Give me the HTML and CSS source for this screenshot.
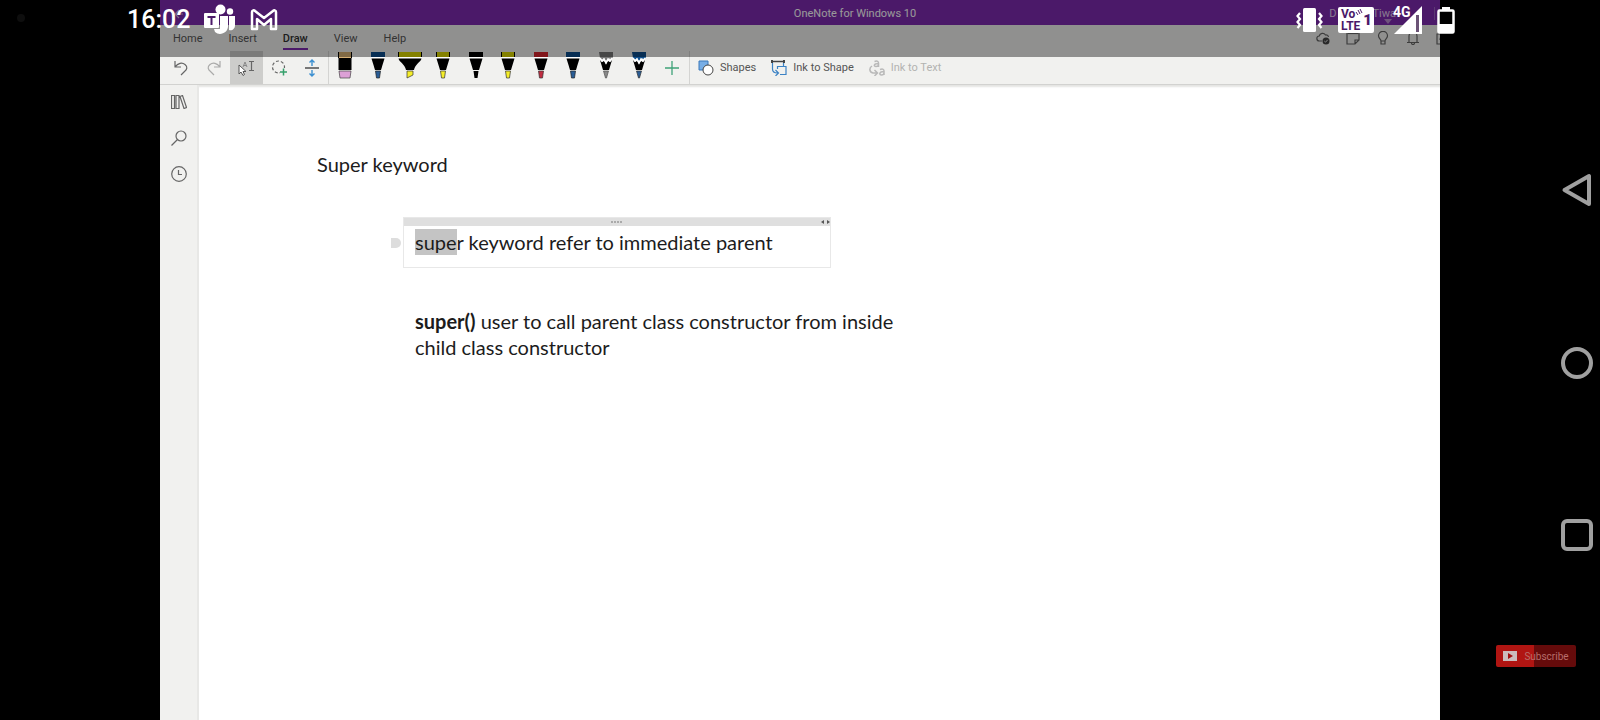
FILE: index.html
```html
<!DOCTYPE html>
<html lang="en">
<head>
<meta charset="utf-8">
<title>OneNote for Windows 10</title>
<link rel="stylesheet" href="styles.css">
</head>
<body>
<div class="screen">
  <div class="margin"><span class="camera"></span></div>

  <div class="app">
    <header class="titlebar">
      <button class="back" aria-label="Back"><svg width="10" height="10" viewBox="0 0 10 10"><path d="M9 5H1M5 1L1 5l4 4" class="line"/></svg></button>
      <h1 class="app-name">OneNote for Windows 10</h1>
      <div class="account"><span>D</span><span class="account-last">Tiwa</span><i class="bar"></i><svg class="caret" width="8" height="5" viewBox="0 0 8 5"><path d="M0 0h8L4 5z" fill="#b98ad0"/></svg></div>
    </header>

    <nav class="tabs">
      <a href="#home">Home</a>
      <a href="#insert">Insert</a>
      <a href="#draw" class="active">Draw</a>
      <a href="#view">View</a>
      <a href="#help">Help</a>
      <div class="tab-actions">
        <button aria-label="Sync status"><svg width="14" height="14" viewBox="0 0 14 14"><path d="M6 10H3.500a2.500 2.500 0 0 1-.3-5A3.500 3.500 0 0 1 9.500 4a2.500 2.500 0 0 1 3 2" class="line"/><circle cx="10" cy="10" r="3.500" fill="#444"/><path d="M8.300 10l1.200 1.200 2.200-2.400" stroke="#ddd" fill="none"/></svg></button>
        <button aria-label="Feed"><svg width="14" height="14" viewBox="0 0 14 14"><path d="M1 2h12v7l-4 4H1zM13 9H9v4" class="line"/><path d="M2 2.500h10" class="line"/></svg></button>
        <button aria-label="Tell me"><svg width="14" height="14" viewBox="0 0 14 14"><path d="M5 10c0-2-2.500-2.500-2.500-5.200a4.500 4.500 0 0 1 9 0C11.500 7.500 9 8 9 10zM5 10v3h4v-3" class="line"/></svg></button>
        <button aria-label="Notifications"><svg width="14" height="14" viewBox="0 0 14 14"><path d="M3 11V5a4 4 0 0 1 8 0v6M1 11.500h12M5.500 12a1.500 1.500 0 0 0 3 0" class="line"/></svg></button>
        <button aria-label="Share"><svg width="14" height="14" viewBox="0 0 14 14"><path d="M5 3H1v10h10V9M4 9c0-3 2-5 7-5" class="line"/></svg></button>
      </div>
    </nav>

    <div class="toolbar">
      <div class="tools">
        <button aria-label="Undo"><svg width="16" height="16" viewBox="0 0 16 16"><path d="M2 1v6h6M2 7c3-4 7-5 10-2.500s2 5-.5 7L8 15" class="line"/></svg></button>
        <button aria-label="Redo" class="dim"><svg width="16" height="16" viewBox="0 0 16 16"><path d="M14 1v6H8M14 7C11 3 7 2 4 4.500s-2 5 .5 7L8 15" class="line"/></svg></button>
        <button aria-label="Select objects or type text" class="pressed"><svg width="18" height="16" viewBox="0 0 18 16"><path d="M2 5v9l2-2 2 3.500 1.500-1L6 11.500h3z" fill="#fff" stroke="#555"/><path d="M6 7l2-5 2 5M7 5.500h2" fill="none" stroke="#888"/><path d="M12 1.500h5M14.500 1.500v9M12 10.500h5" class="line"/></svg></button>
        <button aria-label="Lasso select"><svg width="17" height="16" viewBox="0 0 17 16"><circle cx="7.500" cy="7" r="6" class="line" stroke-dasharray="3 2"/><rect x="9" y="8" width="8" height="8" fill="#f1f1ef"/><path d="M12.500 8.500v7M9 12h7" stroke="#35a06b" fill="none" stroke-width="1.500"/></svg></button>
        <button aria-label="Insert space"><svg width="16" height="18" viewBox="0 0 16 18"><path d="M1 9h14" stroke="#777" stroke-width="2"/><path d="M8 7V1M5.500 3.500L8 1l2.500 2.500M8 11v6M5.500 14.500L8 17l2.500-2.500" fill="none" stroke="#3b8fd0" stroke-width="1.400"/></svg></button>
      </div>
      <div class="pens">
        <button aria-label="Eraser"><svg width="14" height="27" viewBox="0 0 14 27"><path d="M1 0h12v6H1z" fill="#d8b176"/><path d="M0 0h1v6H0zM13 0h1v6h-1zM.5 6h13v12H.5z"/><path d="M1 19h12l-1 7H2z" fill="#dca0d6" stroke="#444" stroke-width=".7"/></svg></button>
        <button aria-label="Pen, blue"><svg width="14" height="27" viewBox="0 0 14 27"><path d="M0 0h14v5H0z" fill="#0d4e8c"/><path d="M0 5h14v1.500H0z" fill="#fff"/><path d="M.5 6.500h13L10 18H4z"/><path d="M4.500 19h5L8.500 26h-3z" fill="#295d96" stroke="#222" stroke-width=".7"/></svg></button>
        <button aria-label="Highlighter, yellow"><svg width="24" height="27" viewBox="0 0 24 27"><path d="M0 0h24v5H0z" fill="#dcd800"/><path d="M0 5h24v1.500H0z" fill="#fff"/><path d="M0 0h1v5H0zM23 0h1v5h-1zM.5 6.500h23C23 10 17 12 16 18H8C7 12 1 10 .5 6.500z"/><path d="M9 19h6v4l-6 3z" fill="#f5ed28" stroke="#333" stroke-width=".7"/></svg></button>
        <button aria-label="Pen, yellow"><svg width="14" height="27" viewBox="0 0 14 27"><path d="M0 0h14v5H0z" fill="#dcd800"/><path d="M0 5h14v1.500H0z" fill="#fff"/><path d="M0 0h1v5H0zM13 0h1v5h-1zM.5 6.500h13L10 18H4z"/><path d="M4.500 19h5L8.500 26h-3z" fill="#f5ed28" stroke="#333" stroke-width=".7"/></svg></button>
        <button aria-label="Pen, black"><svg width="14" height="27" viewBox="0 0 14 27"><path d="M0 5h14v1.500H0z" fill="#fff"/><path d="M0 0h14v5H0zM.5 6.500h13L10 18H4zM4.500 19h5L8.500 26h-3z"/></svg></button>
        <button aria-label="Pen, yellow 2"><svg width="14" height="27" viewBox="0 0 14 27"><path d="M0 0h14v5H0z" fill="#dcd800"/><path d="M0 5h14v1.500H0z" fill="#fff"/><path d="M0 0h1v5H0zM13 0h1v5h-1zM.5 6.500h13L10 18H4z"/><path d="M4.500 19h5L8.500 26h-3z" fill="#f5ed28" stroke="#333" stroke-width=".7"/></svg></button>
        <button aria-label="Pen, red"><svg width="14" height="27" viewBox="0 0 14 27"><path d="M0 0h14v5H0z" fill="#d8262e"/><path d="M0 5h14v1.500H0z" fill="#fff"/><path d="M.5 6.500h13L10 18H4z"/><path d="M4.500 19h5L8.500 26h-3z" fill="#c02c40" stroke="#333" stroke-width=".7"/></svg></button>
        <button aria-label="Pen, blue 2"><svg width="14" height="27" viewBox="0 0 14 27"><path d="M0 0h14v5H0z" fill="#0d4e8c"/><path d="M0 5h14v1.500H0z" fill="#fff"/><path d="M.5 6.500h13L10 18H4z"/><path d="M4.500 19h5L8.500 26h-3z" fill="#295d96" stroke="#222" stroke-width=".7"/></svg></button>
        <button aria-label="Pencil, gray"><svg width="14" height="27" viewBox="0 0 14 27"><path d="M0 0h14v5l-2 3-2-2-2 2-1 1-2-3-2 2-2-2z" fill="#777"/><path d="M1 8l2 2 2-1 2 3 2-3 2 1 2-2-3 10H4z"/><path d="M1 6l2 3 2-2 2 4 2-4 2 2 2-3" fill="none" stroke="#fff" stroke-width="1.600"/><path d="M4.500 19h5L7.500 26h-1z" fill="#888" stroke="#555" stroke-width=".7"/></svg></button>
        <button aria-label="Pencil, blue"><svg width="14" height="27" viewBox="0 0 14 27"><path d="M0 0h14v5l-2 3-2-2-2 2-1 1-2-3-2 2-2-2z" fill="#0d4e8c"/><path d="M1 8l2 2 2-1 2 3 2-3 2 1 2-2-3 10H4z"/><path d="M1 6l2 3 2-2 2 4 2-4 2 2 2-3" fill="none" stroke="#fff" stroke-width="1.600"/><path d="M4.500 19h5L7.500 26h-1z" fill="#295d96" stroke="#333" stroke-width=".7"/></svg></button>
      </div>
      <button class="add" aria-label="Add pen"><svg width="14" height="14" viewBox="0 0 14 14"><path d="M7 0v14M0 7h14" stroke="#3fa378" stroke-width="1.300"/></svg></button>
      <div class="commands">
        <button><svg width="16" height="16" viewBox="0 0 16 16"><path d="M1 1h9v9H1z" fill="#78aee6" stroke="#3a78ba"/><circle cx="10" cy="10" r="5" fill="#fff" stroke="#444"/></svg>Shapes</button>
        <button><svg width="16" height="16" viewBox="0 0 16 16"><path d="M1 1.500h12" stroke="#444" stroke-width="1.500"/><path d="M1 0v3M13 0v3" stroke="#444" stroke-width="2"/><path d="M12.500 3v3M1.500 3v6c0 3 2 4 5 4M4.500 10l3 3-3 3M6.500 9V6.500h8.500v8H9" fill="none" stroke="#3b82c4" stroke-width="1.200"/></svg>Ink to Shape</button>
        <button disabled><svg width="16" height="16" viewBox="0 0 16 16"><path d="M5.500 1.500c3-1 4 0 4 1.500v4M9.500 3.500c-5 0-5 3-2.500 3 1.500 0 2.500-1 2.500-2M11 9.500c3-1 4 0 4 1.500v4M15 11.500c-5 0-5 3.500-2.500 3.500 1.500 0 2.500-1 2.500-2M3 6c-3 2-3 6 1 7h4M5.500 10l3 3-3 3" fill="none" stroke="#b9b9b9" stroke-width="1.500"/></svg>Ink to Text</button>
      </div>
    </div>

    <div class="workspace">
      <aside class="rail">
        <button aria-label="Show notebooks"><svg width="16" height="14" viewBox="0 0 16 14"><path d="M.5.500h3v13h-3zM5 .500h3v13H5zM9 1.500l2.500-1 4 12-2.500 1z" class="line"/></svg></button>
        <button aria-label="Search"><svg width="16" height="16" viewBox="0 0 16 16"><circle cx="10" cy="6" r="5" class="line"/><path d="M6.500 9.500l-6 6" class="line"/></svg></button>
        <button aria-label="Recent notes"><svg width="16" height="16" viewBox="0 0 16 16"><circle cx="8" cy="8" r="7.300" class="line"/><path d="M7.500 4v4.500H11" class="line"/></svg></button>
      </aside>
      <main class="page">
        <h2 class="page-title">Super keyword</h2>
        <section class="note">
          <span class="grip"></span>
          <div class="note-bar">
            <svg class="dots" width="12" height="2" viewBox="0 0 12 2"><path d="M0 1h2M3 1h2M6 1h2M9 1h2" stroke="#aaa" stroke-width="2"/></svg>
            <svg class="resize" width="9" height="4" viewBox="0 0 9 4"><path d="M3 0v4L0 2zM6 0v4l3-2z" fill="#555"/></svg>
          </div>
          <p><span class="selected">supe</span>r keyword refer to immediate parent</p>
        </section>
        <p class="free-text"><b>super()</b> user to call parent class constructor from inside child class constructor</p>
      </main>
    </div>
  </div>

  <div class="system-nav">
    <button aria-label="Back"><svg width="32" height="34" viewBox="0 0 32 34"><path d="M28 3v28L3.500 17z" fill="none" stroke="#a0a0a0" stroke-width="4" stroke-linejoin="round"/></svg></button>
    <button aria-label="Home"><svg width="32" height="32" viewBox="0 0 32 32"><circle cx="16" cy="16" r="14" fill="none" stroke="#a0a0a0" stroke-width="4"/></svg></button>
    <button aria-label="Recent apps"><svg width="32" height="32" viewBox="0 0 32 32"><rect x="2" y="2" width="28" height="28" rx="4" fill="none" stroke="#a0a0a0" stroke-width="4"/></svg></button>
    <button class="subscribe"><svg width="14" height="10" viewBox="0 0 14 10"><path d="M0 0h14v10H0z" fill="#cbbcbc"/><path d="M5 2l5 3-5 3z" fill="#a3100f"/></svg>Subscribe</button>
  </div>

  <div class="status">
    <div class="status-left">
      <time>16:02</time>
      <svg width="32" height="32" viewBox="0 0 32 32" fill="#fff"><circle cx="16.500" cy="5.500" r="5"/><circle cx="26" cy="7.500" r="3.200"/><path d="M16 12h8v11a8 8 0 0 1-13 5l-1-3h6z"/><path d="M25 12h6v9c0 4-3 6-6 5z"/><rect x="0" y="9" width="15" height="15" rx="1"/><path d="M3.500 13h8M7.500 13v8" stroke="#4b1969" stroke-width="2"/></svg>
      <svg width="28" height="22" viewBox="0 0 28 22"><path d="M2 20V3c0-2 2-2 3-1l9 7 9-7c1-1 3-1 3 1v17h-5V10l-7 6-7-6v10z" fill="none" stroke="#fff" stroke-width="2.500" stroke-linejoin="round"/></svg>
    </div>
    <div class="status-right">
      <svg width="27" height="26" viewBox="0 0 27 26"><rect x="7" y="1" width="13" height="24" rx="1.500" fill="#fff"/><path d="M4 6L1.500 9 4 12l-2.500 3L4 18l-2.500 3M23 6l2.500 3-2.500 3 2.500 3-2.500 3 2.500 3" fill="none" stroke="#fff" stroke-width="2.200"/></svg>
      <div class="volte"><div><span>Vo<svg width="8" height="8" viewBox="0 0 8 8"><path d="M1 4l2 3M3 2l2 4M5 1l2 4" stroke="#4b1969" fill="none"/></svg></span><span>LTE</span></div><b>1</b></div>
      <div class="signal"><span>4G</span><svg width="28" height="28" viewBox="0 0 28 28"><path d="M28 0v28H0z" fill="#fff"/><path d="M23.500 9v17" stroke="#6b5376" stroke-width="3"/></svg></div>
      <svg width="18" height="27" viewBox="0 0 18 27"><path d="M5 0h8v3H5z" fill="#fff"/><rect x="1.500" y="3.500" width="15" height="22" rx="1" fill="#000" stroke="#fff" stroke-width="2.500"/><path d="M2 17h14v8H2z" fill="#fff"/></svg>
    </div>
  </div>
</div>
</body>
</html>
```
FILE: styles.css
```css
* { box-sizing: border-box; }
body { margin: 0; background: #000; font-family: Roboto, "Noto Sans", sans-serif; font-size: 11px; color: #555; }
button { border: 0; padding: 0; margin: 0; background: none; font: inherit; color: inherit; display: flex; align-items: center; justify-content: center; }
svg { display: block; flex: none; }
.line { fill: none; stroke: #666; stroke-width: 1.2; }

.screen { position: relative; display: grid; grid-template-columns: 1fr 8fr 1fr; min-height: 100vh; overflow: hidden; }
.margin { padding: 14px 17px; }
.camera { display: block; width: 8px; height: 8px; border-radius: 50%; background: #181818; }

.app { display: flex; flex-direction: column; min-width: 0; overflow: hidden; background: #fff; }
.titlebar { display: grid; grid-template-columns: 1fr auto 1fr; align-items: center; height: 25px; padding: 2px 0 0 14px; background: #7d2aaf; color: #fff; }
.titlebar .line { stroke: #cdb2dd; }
.back { justify-self: start; }
.app-name { margin: 0; padding-left: 96px; font-size: 11px; font-weight: 400; }
.account { position: relative; justify-self: end; display: flex; align-items: center; color: #e2cdef; }
.account-last { margin-left: 36px; }
.bar { width: 1px; height: 13px; margin: 0 5px 0 38px; background: #9a5fc0; }
.caret { position: absolute; right: 48px; bottom: -4px; }

.tabs { display: flex; align-items: flex-start; gap: 26px; height: 26px; padding: 5px 0 0 13px; background: #f1f1ef; }
.tabs a { height: 20px; line-height: 18px; color: #555; text-decoration: none; }
.tabs .active { color: #333; font-weight: 500; border-bottom: 2px solid #7d2aaf; }
.tab-actions { display: flex; gap: 16px; margin: 1px -10px 0 auto; }

.toolbar { display: flex; align-items: stretch; height: 34px; padding-left: 5px; background: #f1f1ef; border-bottom: 1px solid #d2d2d0; }
.tools { display: grid; grid-template-columns: repeat(5, 1fr); width: 164px; border-right: 1px solid #d4d4d2; }
.tools .dim { opacity: .5; }
.tools .pressed { background: #cdcdcb; }
.pens { display: grid; grid-template-columns: repeat(10, 1fr); width: 326px; }
.pens button { align-items: flex-start; padding-top: 1px; }
.add { width: 34px; }
.commands { display: flex; gap: 15px; padding-left: 8px; border-left: 1px solid #d4d4d2; }
.commands button { gap: 6px; }
.commands button:disabled { color: #b3b3b1; }

.workspace { flex: 1; display: flex; box-shadow: inset 0 3px 2px -1px #e4e4e2; }
.rail { flex: none; display: flex; flex-direction: column; gap: 20px; width: 39px; padding-top: 9px; background: #f1f1ef; border-right: 2px solid #e8e8e6; }
.rail button { height: 16px; }
.page { flex: 1; padding: 65px 40px 0 118px; font-family: Lato, "Open Sans", sans-serif; font-size: 20px; line-height: 26px; color: #1c1c1c; }
.page-title { margin: 0; font-size: 20px; font-weight: 400; line-height: 28px; }
.note { position: relative; width: 428px; height: 51px; margin: 39px 0 0 86px; border: 1px solid #e8e8e8; }
.note p { margin: 0; padding: 3px 11px; white-space: nowrap; }
.note-bar { position: relative; display: flex; align-items: center; justify-content: center; height: 8px; background: #dfdfdf; }
.resize { position: absolute; right: 0; top: 2px; }
.grip { position: absolute; left: -13px; top: 20px; width: 10px; height: 10px; background: #ddd; border-radius: 0 5px 5px 0; }
.selected { padding: 1px 0; background: #c4c4c4; }
.free-text { width: 520px; margin: 40px 0 0 98px; }

.system-nav { position: relative; display: flex; flex-direction: column; align-items: flex-end; gap: 140px; padding: 173px 7px 0 0; }
.subscribe { position: absolute; right: 24px; bottom: 53px; width: 80px; height: 22px; gap: 7px; border-radius: 2px; background: linear-gradient(90deg, #b01512 47%, #650b0b 47%); color: #b86e6b; font-size: 10px; }

.status { position: absolute; inset: 0 0 auto 0; display: flex; justify-content: space-between; height: 57px; padding: 5px 145px 0 127px; background: rgba(0, 0, 0, .4); color: #fff; pointer-events: none; }
.status-left, .status-right { display: flex; align-items: center; height: 30px; }
.status-left { gap: 14px; }
.status time { font-size: 25px; font-weight: 500; line-height: 30px; }
.status-right { gap: 15px; }
.volte { display: flex; align-items: center; justify-content: space-between; width: 36px; height: 26px; padding: 0 3px; border-radius: 2px; background: #fff; color: #4b1969; font-size: 12px; font-weight: 700; line-height: 12px; }
.volte span { display: flex; }
.volte b { font-size: 15px; }
.signal { position: relative; width: 33px; padding-left: 5px; }
.signal span { position: absolute; left: 4px; top: -1px; font-size: 14px; font-weight: 700; line-height: 14px; }
```
